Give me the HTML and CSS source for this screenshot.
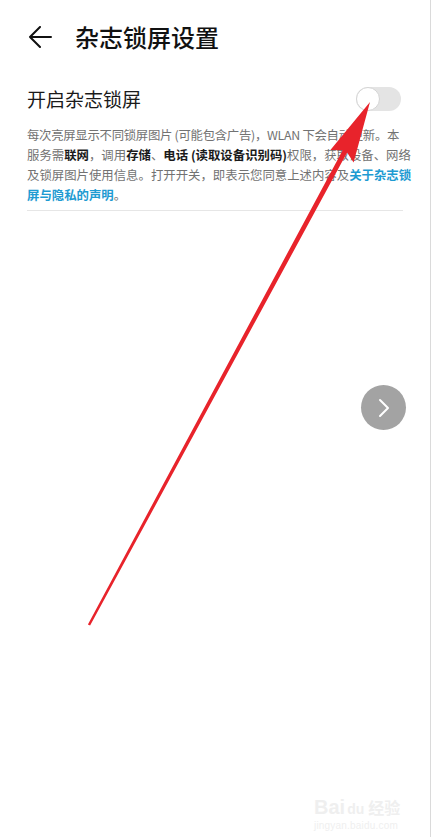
FILE: index.html
```html
<!DOCTYPE html>
<html lang="zh-CN">
<head>
<meta charset="utf-8">
<title>杂志锁屏设置</title>
<link rel="stylesheet" href="styles.css">
</head>
<body>
<div class="page">
  <header class="header">
    <svg class="back" width="24" height="22" viewBox="0 0 24 22">
      <path d="M12 1 L2 11 L12 21 M2 11 H23" fill="none" stroke="#111" stroke-width="2" stroke-linecap="round" stroke-linejoin="round"/>
    </svg>
    <h1 class="title">杂志锁屏设置</h1>
  </header>

  <section class="setting">
    <div class="row">
      <span class="label">开启杂志锁屏</span>
      <span class="switch"><span class="knob"></span></span>
    </div>
    <p class="desc"><span class="tight">每次亮屏显示不同锁屏图片 (可能包含广告)，WLAN 下会自动更新。本</span><br>服务需<b>联网</b>，调用<b>存储</b>、<b>电话 (读取设备识别码)</b>权限，获取设备、网络<br>及锁屏图片使用信息。打开开关，即表示您同意上述内容及<a class="link">关于杂志锁<br>屏与隐私的声明</a>。</p>
  </section>

  <div class="next">
    <svg width="16" height="20" viewBox="0 0 16 20"><path d="M4 2 L12 10 L4 18" fill="none" stroke="#fff" stroke-width="2" stroke-linecap="round" stroke-linejoin="round"/></svg>
  </div>

  <svg class="annot" width="430" height="837" viewBox="0 0 430 837">
    <polygon fill="#e8232b" points="370,102 353.6,162.5 347.1,152.6 90.1,625.6 87.9,624.4 342.7,150.2 330.4,150.1"/>
  </svg>

  <div class="watermark">
    <div class="wm-top"><span class="wm-bai">Bai</span><span class="wm-paw">du</span><span class="wm-jy">经验</span></div>
    <div class="wm-url">jingyan.baidu.com</div>
  </div>
</div>
</body>
</html>
```

FILE: styles.css
```css
html, body {
  margin: 0;
  padding: 0;
  background: #fff;
}
body {
  font-family: "Noto Sans CJK SC", "Noto Sans", sans-serif;
  color: #1a1a1a;
}
.page {
  position: relative;
  width: 430px;
  height: 837px;
  border-right: 1px solid #dadada;
  overflow: hidden;
}
.header {
  height: 74px;
  display: flex;
  align-items: center;
  padding-left: 28px;
}
.back {
  display: block;
}
.title {
  margin: 0 0 0 23px;
  font-size: 24px;
  font-weight: 500;
  line-height: 30px;
  color: #111;
}
.setting {
  margin-left: 27px;
  width: 376px;
  padding-bottom: 5px;
  border-bottom: 1px solid #e6e6e6;
}
.row {
  height: 50px;
  display: flex;
  align-items: center;
  justify-content: space-between;
}
.label {
  font-size: 19px;
  color: #1a1a1a;
  line-height: 26px;
}
.switch {
  position: relative;
  width: 45px;
  height: 24px;
  border-radius: 12px;
  background: #e4e4e4;
  margin-right: 2px;
  display: block;
}
.knob {
  position: absolute;
  left: 0;
  top: 0;
  width: 22px;
  height: 22px;
  border-radius: 50%;
  background: #fff;
  border: 1px solid #d4d4d4;
}
.desc {
  margin: 1px 0 0 0;
  font-size: 12.4px;
  line-height: 20px;
  color: #727272;
  white-space: nowrap;
}
.tight {
  letter-spacing: -0.3px;
}
.desc b {
  color: #1a1a1a;
  font-weight: 700;
}
.link {
  color: #1e9bd2;
  font-weight: 700;
}
.next {
  position: absolute;
  left: 361px;
  top: 385px;
  width: 45px;
  height: 45px;
  border-radius: 50%;
  background: #a3a3a3;
  display: flex;
  align-items: center;
  justify-content: center;
}
.next svg {
  display: block;
}
.annot {
  position: absolute;
  left: 0;
  top: 0;
}
.watermark {
  position: absolute;
  left: 314px;
  top: 796px;
  color: #efefef;
  font-family: "Liberation Sans", sans-serif;
}
.wm-top {
  font-size: 20px;
  font-weight: 700;
  line-height: 22px;
  display: flex;
  align-items: baseline;
}
.wm-paw {
  font-size: 14px;
  margin: 0 4px 0 2px;
}
.wm-jy {
  font-family: "Noto Sans CJK SC", sans-serif;
  font-size: 16px;
}
.wm-url {
  font-size: 10px;
  line-height: 12px;
  letter-spacing: 0.2px;
}
```
